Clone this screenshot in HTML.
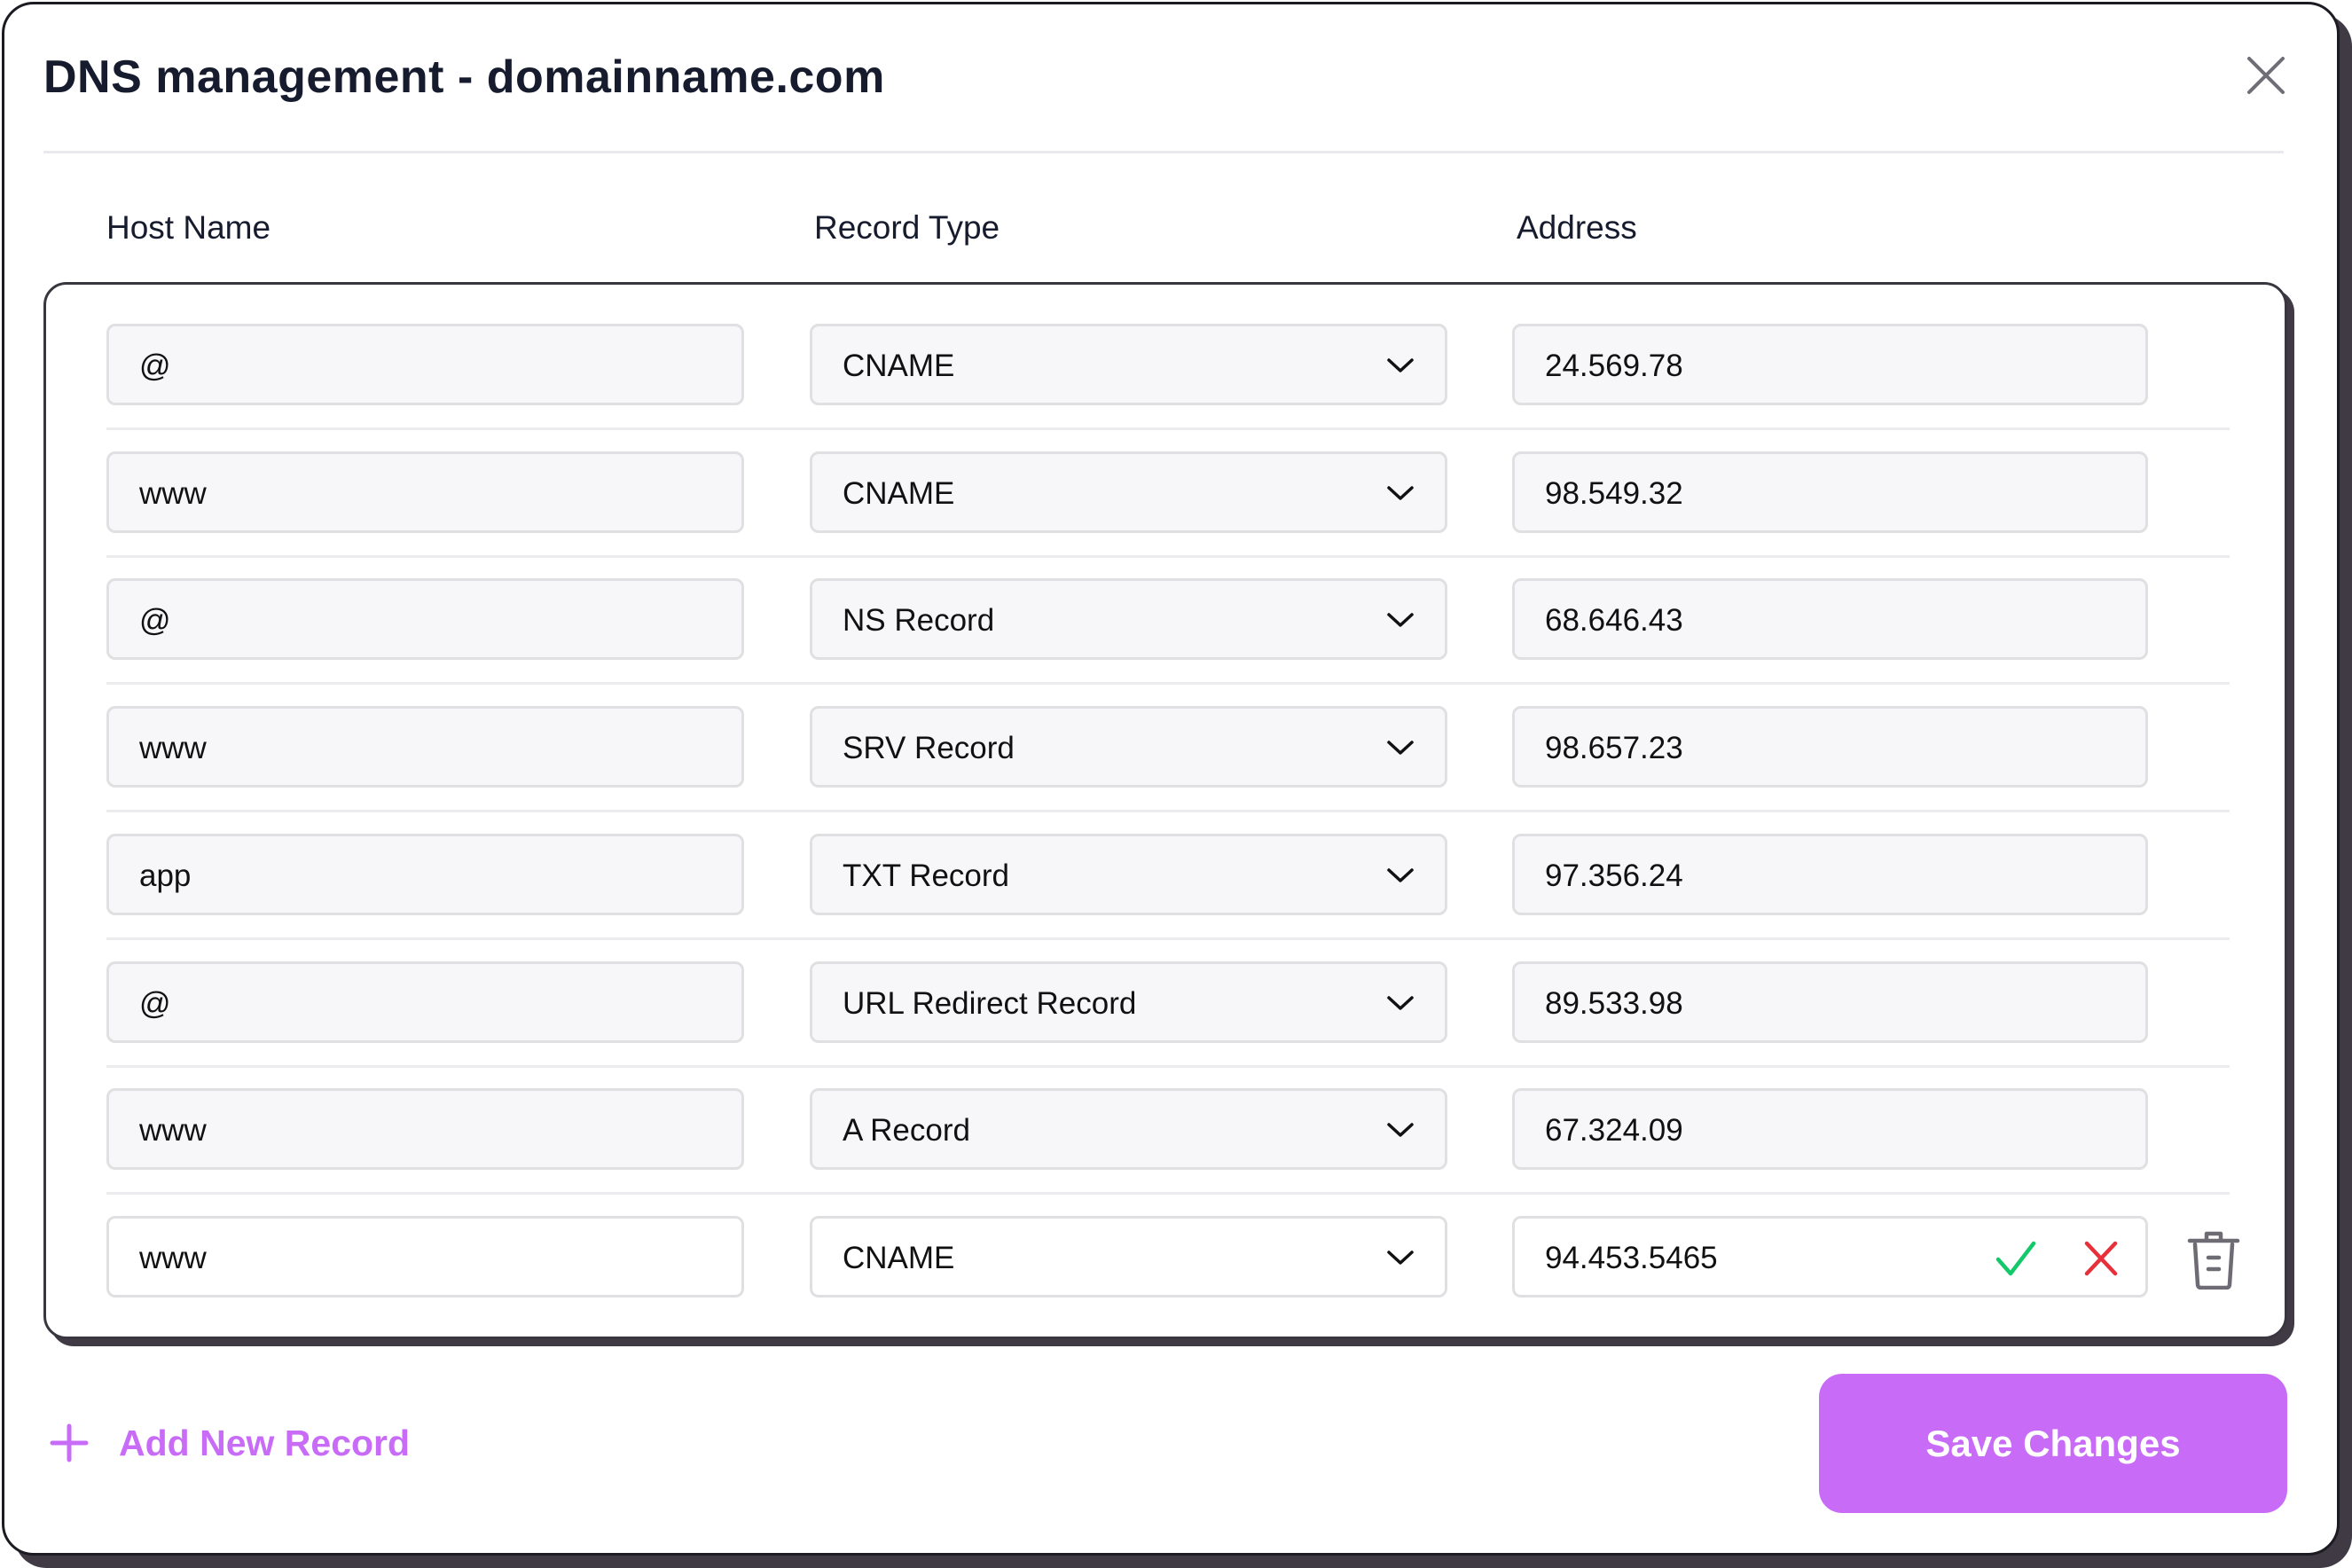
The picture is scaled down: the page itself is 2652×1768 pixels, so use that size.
<!DOCTYPE html>
<html><head><meta charset="utf-8"><style>
*{box-sizing:border-box;margin:0;padding:0}
body{width:2652px;height:1768px;background:#fff;position:relative;overflow:hidden;font-family:"Liberation Sans",sans-serif}
.shadow{position:absolute;left:16px;top:16px;width:2636px;height:1752px;background:#403a45;border-radius:36px}
.modal{position:absolute;left:2px;top:2px;width:2636px;height:1752px;background:#fff;border:3px solid #1d1b22;border-radius:36px}
.title{position:absolute;left:49px;top:57px;font-size:52px;font-weight:bold;color:#161b2e;letter-spacing:0.5px}
.hr{position:absolute;left:49px;top:170px;width:2526px;height:3px;background:#e9e9ee}
.hd{position:absolute;top:236px;font-size:37px;color:#161b2e}
.tshadow{position:absolute;left:57px;top:326px;width:2530px;height:1192px;background:#403a45;border-radius:26px}
.table{position:absolute;left:49px;top:318px;width:2530px;height:1192px;background:#fff;border:3px solid #3a3640;border-radius:26px}
.in{position:absolute;height:92px;background:#f7f7f9;border:3px solid #e0e0e3;border-radius:10px;font-size:35px;color:#111;line-height:90px;padding-left:34px}
.sep{position:absolute;left:120px;width:2394px;height:3px;background:#ececef}
.chev{position:absolute;right:34px;top:28px}
.btn{position:absolute;left:2051px;top:1549px;width:528px;height:157px;background:#c86cf8;border-radius:26px;color:#fff;font-size:42px;font-weight:bold;text-align:center;line-height:157px}
.add{position:absolute;left:134px;top:1604px;font-size:41px;font-weight:bold;color:#c86cf8}
</style></head><body>
<div class="shadow"></div>
<div class="modal"></div>
<div class="title">DNS management - domainname.com</div>
<svg style="position:absolute;left:2533px;top:63px" width="44" height="44" viewBox="0 0 44 44"><path d="M3 3L41 41M41 3L3 41" stroke="#6f6d76" stroke-width="4" stroke-linecap="round"/></svg>
<div class="hr"></div>
<div class="hd" style="left:120px">Host Name</div>
<div class="hd" style="left:918px">Record Type</div>
<div class="hd" style="left:1710px">Address</div>
<div class="tshadow"></div>
<div class="table"></div>
<div id="rows"></div>
<script>
var d=[["@","CNAME","24.569.78"],["www","CNAME","98.549.32"],["@","NS Record","68.646.43"],["www","SRV Record","98.657.23"],["app","TXT Record","97.356.24"],["@","URL Redirect Record","89.533.98"],["www","A Record","67.324.09"],["www","CNAME","94.453.5465"]];
var h="";
for(var i=0;i<8;i++){var t=365+i*143.7;var last=i==7;var bg=last?"background:#fff;":"";
h+='<div class="in" style="left:120px;top:'+t+'px;width:719px;'+bg+'">'+d[i][0]+'</div>';
h+='<div class="in" style="left:913px;top:'+t+'px;width:719px;'+bg+'">'+d[i][1]+'<svg class="chev" width="32" height="32" viewBox="0 0 32 32"><path d="M3 10L16 22L29 10" fill="none" stroke="#111" stroke-width="3.5" stroke-linecap="round" stroke-linejoin="round"/></svg></div>';
h+='<div class="in" style="left:1705px;top:'+t+'px;width:717px;'+bg+'">'+d[i][2]+'</div>';
if(!last)h+='<div class="sep" style="top:'+(t+117)+'px"></div>';}
document.getElementById("rows").innerHTML=h;
</script>
<svg style="position:absolute;left:2250px;top:1399px" width="46" height="40" viewBox="0 0 46 40"><path d="M3 21L17 37L43 3" fill="none" stroke="#14c96a" stroke-width="4.5" stroke-linecap="round" stroke-linejoin="round"/></svg>
<svg style="position:absolute;left:2350px;top:1399px" width="38" height="40" viewBox="0 0 38 40"><path d="M3 3L35 37M35 3L3 37" stroke="#e8303a" stroke-width="4.5" stroke-linecap="round"/></svg>
<svg style="position:absolute;left:2466px;top:1386px" width="60" height="68" viewBox="0 0 60 68"><path d="M3 13H57M22 12V5H38V12M9 17L12 62Q12 66 16 66H44Q48 66 48 62L51 17M24 32H36M24 45H36" fill="none" stroke="#6f6b74" stroke-width="4.5" stroke-linecap="round" stroke-linejoin="round"/></svg>
<svg style="position:absolute;left:56px;top:1605px" width="44" height="44" viewBox="0 0 44 44"><path d="M22 3V41M3 22H41" stroke="#c86cf8" stroke-width="5" stroke-linecap="round"/></svg>
<div class="add">Add New Record</div>
<div class="btn">Save Changes</div>
</body></html>
